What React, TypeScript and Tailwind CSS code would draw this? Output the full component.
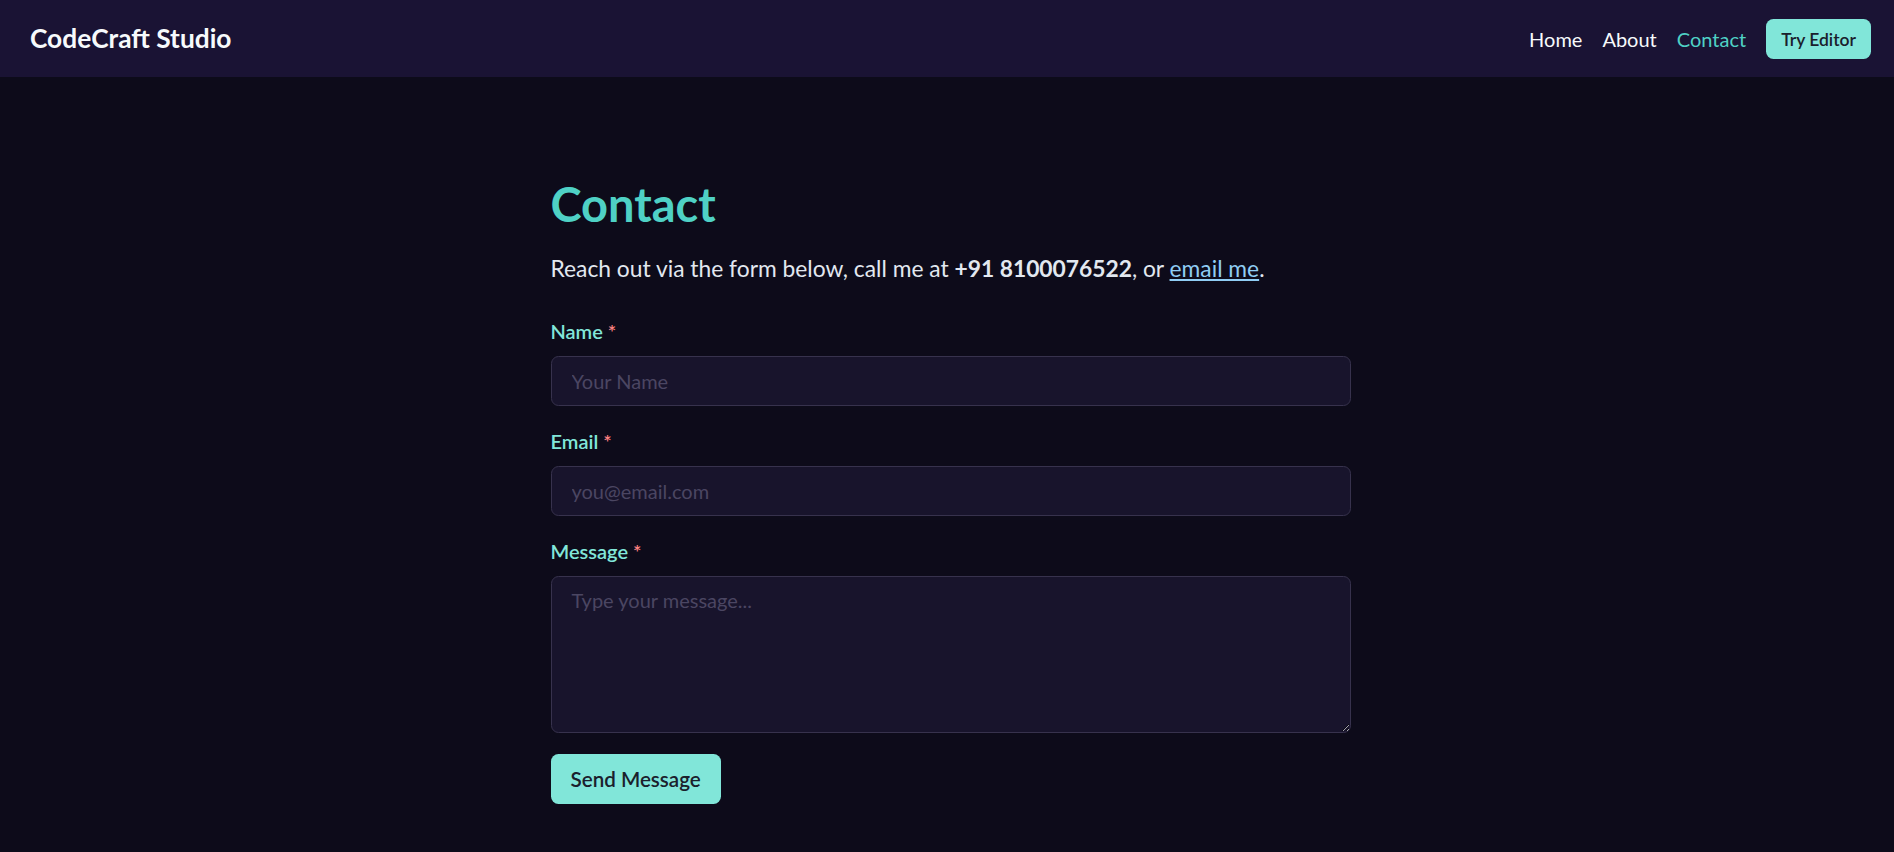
export default function App() {
  return (
    <div className="min-h-screen bg-[#0d0b1a] font-['Lato','Noto_Sans',sans-serif]">
      <nav className="flex h-[77px] items-center justify-between bg-[#1a1334] pl-[30px] pr-[23px]">
        <div className="text-[26.3px] font-bold leading-none text-[#f7fafc]">CodeCraft Studio</div>
        <div className="flex items-center gap-[20px]">
          <a className="text-[20px] text-[#f7fafc]">Home</a>
          <a className="text-[20px] text-[#f7fafc]">About</a>
          <a className="text-[20px] text-[#4fd1c5]">Contact</a>
          <button className="flex h-[40px] items-center rounded-[7.5px] bg-[#81e6d9] px-[15px] pt-[2px] text-[17.5px] font-semibold leading-none text-[#1a202c]">
            Try Editor
          </button>
        </div>
      </nav>
      <main className="flex justify-center pb-[20px] pl-[7px] pt-[100px]">
        <div className="w-[800px]">
          <h1 className="mb-[20px] text-[47px] font-bold leading-[54px] text-[#4fd1c5]">Contact</h1>
          <p className="mb-[31px] text-[22.8px] leading-[34px] text-[#e2e8f0]">
            Reach out via the form below, call me at <strong className="font-bold">+91 8100076522</strong>, or{" "}
            <a className="text-[#90cdf4] underline">email me</a>.
          </p>
          <form onSubmit={(e) => e.preventDefault()}>
            <div className="mb-[20px]">
              <label className="mb-[10px] block text-[20px] font-semibold leading-[30px] text-[#81e6d9]">
                Name<span className="ml-[5px] text-[#fc8181]">*</span>
              </label>
              <input
                placeholder="Your Name"
                className="block h-[50px] w-full rounded-[7.5px] border border-[#37324d] bg-[#18142c] px-[20px] text-[20px] text-[#e2e8f0] outline-none placeholder:text-[#4b4662]"
              />
            </div>
            <div className="mb-[20px]">
              <label className="mb-[10px] block text-[20px] font-semibold leading-[30px] text-[#81e6d9]">
                Email<span className="ml-[5px] text-[#fc8181]">*</span>
              </label>
              <input
                placeholder="you@email.com"
                className="block h-[50px] w-full rounded-[7.5px] border border-[#37324d] bg-[#18142c] px-[20px] text-[20px] text-[#e2e8f0] outline-none placeholder:text-[#4b4662]"
              />
            </div>
            <div className="mb-[21px]">
              <label className="mb-[10px] block text-[20px] font-semibold leading-[30px] text-[#81e6d9]">
                Message<span className="ml-[5px] text-[#fc8181]">*</span>
              </label>
              <textarea
                placeholder="Type your message..."
                className="block h-[157px] w-full rounded-[7.5px] border border-[#37324d] bg-[#18142c] px-[20px] py-[10px] text-[20px] leading-[1.375] text-[#e2e8f0] outline-none placeholder:text-[#4b4662]"
              />
            </div>
            <button
              type="submit"
              className="h-[50px] rounded-[7.5px] bg-[#81e6d9] px-[20px] text-[20.6px] font-semibold text-[#1a202c]"
            >
              Send Message
            </button>
          </form>
        </div>
      </main>
    </div>
  );
}
